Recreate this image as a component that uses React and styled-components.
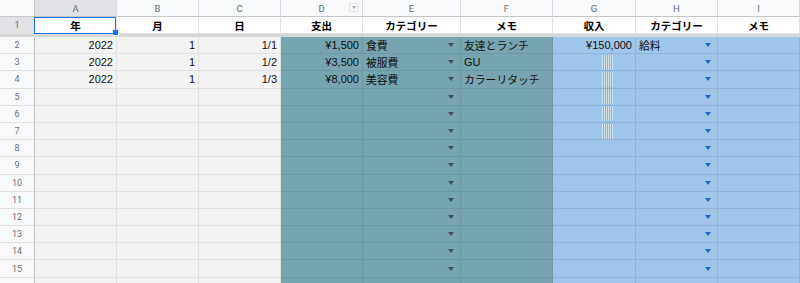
import React from 'react';
import styled, { createGlobalStyle, css } from 'styled-components';

const Global = createGlobalStyle`
  html, body { margin: 0; padding: 0; background: #fff; }
  body {
    width: 800px; height: 283px; overflow: hidden;
    font-family: "Liberation Sans", Arial, "Noto Sans CJK JP", sans-serif;
  }
`;

const COLS = ['A', 'B', 'C', 'D', 'E', 'F', 'G', 'H', 'I'];

const THEMES = {
  gray: { bg: '#f3f3f3', line: '#e1e1e1', arrow: '#5f6368' },
  teal: { bg: '#76a5af', line: '#6b98a2', arrow: '#3f5357' },
  blue: { bg: '#9fc5e8', line: '#8db3d6', arrow: '#1c67c9' },
  white: { bg: '#ffffff', line: '#e2e2e2', arrow: '#5f6368' },
};

const colTheme = (ci) => (ci < 3 ? 'gray' : ci < 6 ? 'teal' : 'blue');

const Sheet = styled.div`
  display: grid;
  grid-template-columns: 35px 82px 82px 82px 82px 98px 92px 83px 82px 82px;
  grid-template-rows: 17px 17px 3px repeat(15, 17.2px);
  width: 800px;
  height: 283px;
  overflow: hidden;
  background: #fff;
`;

const Corner = styled.div`
  background: #f8f9fa;
  border-right: 1px solid #c4c7c5;
  border-bottom: 1px solid #c4c7c5;
  box-sizing: border-box;
`;

const ColHeader = styled.div`
  box-sizing: border-box;
  position: relative;
  display: flex;
  align-items: center;
  justify-content: center;
  background: ${(p) => (p.$active ? '#dfe1e5' : '#f8f9fa')};
  border-right: 1px solid #dadce0;
  border-bottom: 1px solid #c4c7c5;
  font-family: Roboto, "Liberation Sans", Arial, sans-serif;
  font-size: 9.5px;
  color: #6b6f73;
  padding-top: 1px;
`;

const FilterBox = styled.span`
  position: absolute;
  right: 4px;
  top: 3px;
  width: 9px;
  height: 9px;
  box-sizing: border-box;
  border: 1px solid #e3e4e6;
  background: #f8f9fa;
  display: flex;
  align-items: center;
  justify-content: center;
  &::after {
    content: '';
    border-left: 2.5px solid transparent;
    border-right: 2.5px solid transparent;
    border-top: 3px solid #a6a9ad;
  }
`;

const RowHeader = styled.div`
  box-sizing: border-box;
  display: flex;
  align-items: center;
  justify-content: center;
  background: ${(p) => (p.$active ? '#dfe1e5' : '#f8f9fa')};
  border-right: 1px solid #c4c7c5;
  border-bottom: 1px solid #e0e0e0;
  font-family: Roboto, "Liberation Sans", Arial, sans-serif;
  font-size: 9px;
  color: #6b6f73;
`;

const FreezeBar = styled.div`
  grid-column: 1 / -1;
  background: #d6d7d9;
`;

const Cell = styled.div`
  box-sizing: border-box;
  position: relative;
  display: flex;
  align-items: center;
  justify-content: ${(p) => (p.$align === 'right' ? 'flex-end' : p.$align === 'center' ? 'center' : 'flex-start')};
  padding: 0 3px;
  background: ${(p) => THEMES[p.$theme].bg};
  border-right: 1px solid ${(p) => THEMES[p.$theme].line};
  border-bottom: 1px solid ${(p) => THEMES[p.$theme].line};
  font-size: 11px;
  color: #111;
  white-space: nowrap;
  overflow: visible;
  ${(p) =>
    p.$bold &&
    css`
      font-weight: bold;
      font-family: "Noto Sans CJK JP", "Liberation Sans", sans-serif;
      font-size: 10.5px;
      color: #000;
    `}
  ${(p) =>
    p.$selected &&
    css`
      z-index: 2;
      &::after {
        content: '';
        position: absolute;
        left: -1px;
        top: 0;
        right: 0;
        bottom: -1px;
        border: 1.5px solid #1a73e8;
      }
    `}
`;

const CellText = styled.span`
  font-family: ${(p) => (p.$jp ? '"Noto Sans CJK JP", sans-serif' : '"Liberation Sans", Arial, sans-serif')};
  font-size: ${(p) => (p.$jp ? '10.8px' : '11px')};
  line-height: 1;
`;

const Handle = styled.span`
  position: absolute;
  right: -3px;
  bottom: -3px;
  width: 5px;
  height: 5px;
  background: #1a73e8;
  border: 1px solid #fff;
  border-left: none;
  border-top: none;
  z-index: 3;
`;

const Arrow = styled.span`
  position: absolute;
  right: 6px;
  top: 50%;
  margin-top: -2px;
  width: 0;
  height: 0;
  border-left: 3.5px solid transparent;
  border-right: 3.5px solid transparent;
  border-top: 4px solid ${(p) => p.$color};
`;

const Glitch = styled.span`
  margin-right: 19px;
  width: 11px;
  height: 15px;
  background: repeating-linear-gradient(
    90deg,
    #dfe9ea 0 1px,
    #8fb3bb 1px 2px
  );
  opacity: 0.8;
`;

const HEAD = ['年', '月', '日', '支出', 'カテゴリー', 'メモ', '収入', 'カテゴリー', 'メモ'];

const DATA = [
  ['2022', '1', '1/1', '¥1,500', '食費', '友達とランチ', '¥150,000', '給料', ''],
  ['2022', '1', '1/2', '¥3,500', '被服費', 'GU', '', '', ''],
  ['2022', '1', '1/3', '¥8,000', '美容費', 'カラーリタッチ', '', '', ''],
];

const RIGHT = [0, 1, 2, 3, 6];
const DROPDOWN = [4, 7];
const GLITCH_ROWS = [3, 4, 5, 6, 7];

const isJp = (s) => /[^\x00-\x7F¥]/.test(s);

export default function App() {
  const bodyRows = [];
  for (let r = 2; r <= 16; r++) {
    const vals = DATA[r - 2] || [];
    const partial = r === 16;
    bodyRows.push(
      <React.Fragment key={r}>
        <RowHeader>{partial ? '' : r}</RowHeader>
        {COLS.map((c, ci) => {
          const theme = colTheme(ci);
          const v = vals[ci] || '';
          return (
            <Cell key={c} $theme={theme} $align={RIGHT.includes(ci) ? 'right' : 'left'}>
              {ci === 6 && GLITCH_ROWS.includes(r) && <Glitch />}
              {v && <CellText $jp={isJp(v)}>{v}</CellText>}
              {DROPDOWN.includes(ci) && !partial && <Arrow $color={THEMES[theme].arrow} />}
            </Cell>
          );
        })}
      </React.Fragment>
    );
  }

  return (
    <>
      <Global />
      <Sheet>
        <Corner />
        {COLS.map((c, ci) => (
          <ColHeader key={c} $active={ci === 0}>
            {c}
            {ci === 3 && <FilterBox />}
          </ColHeader>
        ))}
        <RowHeader $active>1</RowHeader>
        {HEAD.map((h, ci) => (
          <Cell key={ci} $theme="white" $align="center" $bold $selected={ci === 0}>
            {h}
            {ci === 0 && <Handle />}
          </Cell>
        ))}
        <FreezeBar />
        {bodyRows}
      </Sheet>
    </>
  );
}
